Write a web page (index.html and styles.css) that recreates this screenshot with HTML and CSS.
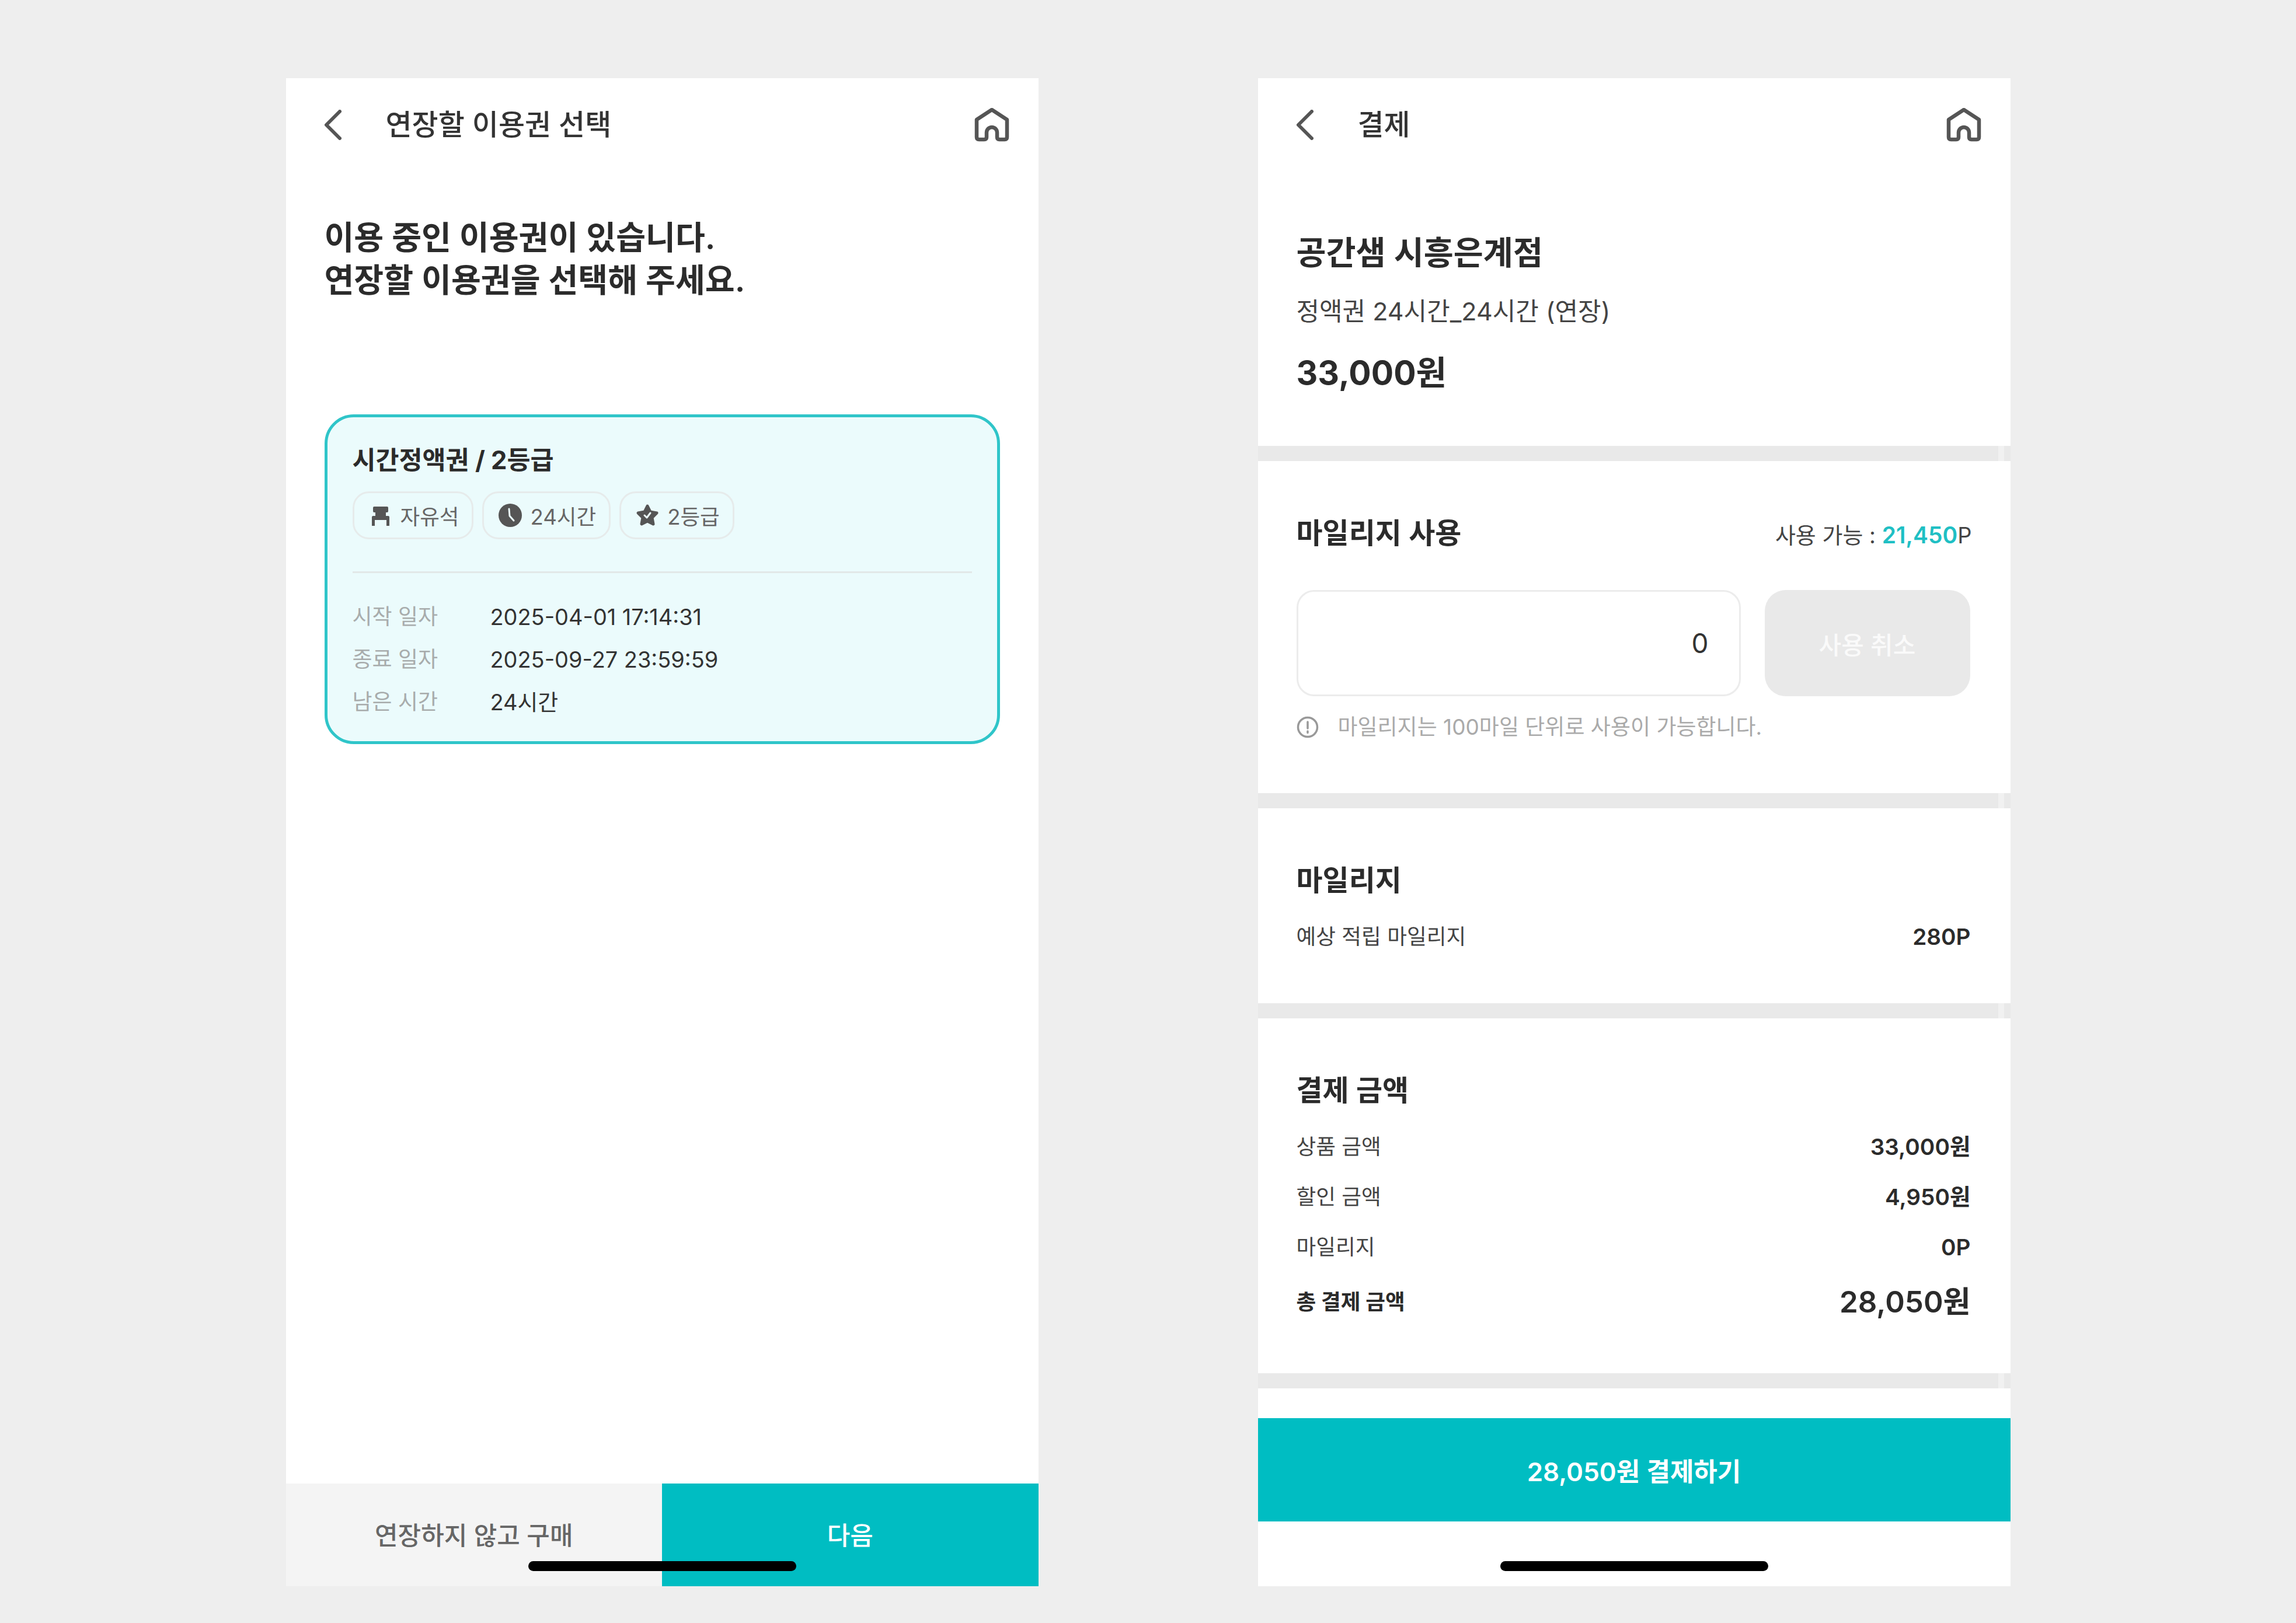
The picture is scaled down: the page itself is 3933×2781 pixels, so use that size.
FILE: index.html

```html
<!DOCTYPE html>
<html lang="ko">
<head>
  <meta charset="UTF-8" />
  <title>이용권 연장 및 결제</title>
  <link rel="stylesheet" href="styles.css">
</head>
<body>
  <div class="board">

    <!-- 연장할 이용권 선택 -->
    <div class="phone">
      <header class="top">
        <svg class="back" viewBox="0 0 30 52"><path d="M27 3 L4 26 L27 49"/></svg>
        <h1>연장할 이용권 선택</h1>
        <svg class="home" viewBox="0 0 60 58"><path d="M30 3 L4 20 V50 Q4 54 8 54 H17 Q21 54 21 50 V42 A9 9 0 0 1 39 42 V50 Q39 54 43 54 H52 Q56 54 56 50 V20 Z"/></svg>
      </header>

      <div class="body">
        <h2 class="lead">이용 중인 이용권이 있습니다.<br>연장할 이용권을 선택해 주세요.</h2>

        <div class="ticket">
          <div class="ticket-name">시간정액권 / 2등급</div>
          <div class="chips">
            <span class="chip">
              <svg viewBox="0 0 40 40"><path class="fill" d="M9 5 H31 Q33 5 33 7 V13 Q33 15 31 15 H29 V21 H33 Q35 21 35 23 V38 H30 V28 H10 V38 H5 V23 Q5 21 7 21 H11 V15 H9 Q7 15 7 13 V7 Q7 5 9 5 Z"/></svg>
              자유석
            </span>
            <span class="chip">
              <svg viewBox="0 0 40 40"><circle class="fill" cx="20" cy="20" r="20"/><path class="hand" d="M18 9 L19 21 L26 29"/></svg>
              24시간
            </span>
            <span class="chip">
              <svg viewBox="0 0 40 40"><path class="fill star" d="M20 4 L25 14 L36 16 L28 24 L30 35 L20 30 L10 35 L12 24 L4 16 L15 14 Z"/><path class="hand" d="M15 20 L19 24 L25 16"/></svg>
              2등급
            </span>
          </div>
          <div class="ticket-line"></div>
          <div class="ticket-rows">
            <div class="ticket-row"><span>시작 일자</span><b>2025-04-01 17:14:31</b></div>
            <div class="ticket-row"><span>종료 일자</span><b>2025-09-27 23:59:59</b></div>
            <div class="ticket-row"><span>남은 시간</span><b>24시간</b></div>
          </div>
        </div>
      </div>

      <div class="bottom-btns">
        <button class="btn-skip">연장하지 않고 구매</button>
        <button class="btn-next">다음</button>
      </div>
      <div class="home-bar"></div>
    </div>

    <!-- 결제 -->
    <div class="phone">
      <header class="top">
        <svg class="back" viewBox="0 0 30 52"><path d="M27 3 L4 26 L27 49"/></svg>
        <h1>결제</h1>
        <svg class="home" viewBox="0 0 60 58"><path d="M30 3 L4 20 V50 Q4 54 8 54 H17 Q21 54 21 50 V42 A9 9 0 0 1 39 42 V50 Q39 54 43 54 H52 Q56 54 56 50 V20 Z"/></svg>
      </header>

      <section class="product">
        <h3 class="store">공간샘 시흥은계점</h3>
        <p class="product-name">정액권 24시간_24시간 (연장)</p>
        <p class="product-price">33,000원</p>
      </section>
      <div class="divider"></div>

      <section class="sec sec-use">
        <div class="sec-head">
          <h3>마일리지 사용</h3>
          <span class="usable">사용 가능 : <em>21,450</em>P</span>
        </div>
        <div class="use-row">
          <div class="mile-input">0</div>
          <button class="btn-cancel">사용 취소</button>
        </div>
        <div class="note">
          <svg viewBox="0 0 38 38"><circle cx="19" cy="19" r="16.5"/><path d="M19 10 V21 M19 26 V28.5"/></svg>
          마일리지는 100마일 단위로 사용이 가능합니다.
        </div>
      </section>
      <div class="divider"></div>

      <section class="sec sec-earn">
        <div class="sec-head"><h3>마일리지</h3></div>
        <div class="line"><span>예상 적립 마일리지</span><b>280P</b></div>
      </section>
      <div class="divider"></div>

      <section class="sec sec-sum">
        <div class="sec-head"><h3>결제 금액</h3></div>
        <div class="line"><span>상품 금액</span><b>33,000원</b></div>
        <div class="line"><span>할인 금액</span><b>4,950원</b></div>
        <div class="line"><span>마일리지</span><b>0P</b></div>
        <div class="line total"><span>총 결제 금액</span><b>28,050원</b></div>
      </section>
      <div class="divider"></div>

      <button class="btn-pay">28,050원 결제하기</button>
      <div class="home-bar"></div>
    </div>

  </div>
</body>
</html>
```

FILE: styles.css

```css
* {
  box-sizing: border-box;
}
body {
  margin: 0;
  background: #eeeeee;
  color: #2b2b2b;
  font-family: Inter, "Noto Sans CJK KR", sans-serif;
}
h1, h2, h3, p {
  margin: 0;
}
button {
  border: none;
  font-family: inherit;
  padding: 0;
}
.board {
  display: flex;
  justify-content: center;
  gap: 376px;
  height: 2781px;
  padding-top: 134px;
  overflow: hidden;
}
.phone {
  position: relative;
  display: flex;
  flex-direction: column;
  width: 1289px;
  height: 2584px;
  background: #fff;
}

/* header */
.top {
  display: flex;
  align-items: center;
  height: 160px;
  padding: 0 50px 0 65px;
  flex-shrink: 0;
}
.back {
  width: 30px;
  height: 52px;
  margin-right: 76px;
}
.back path {
  fill: none;
  stroke: #555;
  stroke-width: 6;
  stroke-linecap: round;
  stroke-linejoin: round;
}
.top h1 {
  flex: 1;
  font-size: 49px;
  line-height: 70px;
  font-weight: 500;
  color: #333;
}
.home {
  width: 60px;
  height: 58px;
}
.home path {
  fill: none;
  stroke: #555;
  stroke-width: 6.5;
  stroke-linejoin: round;
}

/* left screen */
.body {
  flex: 1;
  padding: 76px 66px 0;
}
.lead {
  font-size: 55.3px;
  line-height: 73px;
  font-weight: 600;
  color: #2b2b2b;
}
.ticket {
  margin-top: 194px;
  height: 565px;
  padding: 43px 43px 36px;
  background: #ebfbfc;
  border: 5px solid #2fc5c9;
  border-radius: 50px;
}
.ticket-name {
  font-size: 43.5px;
  line-height: 60px;
  font-weight: 700;
  color: #2b2b2b;
}
.chips {
  display: flex;
  gap: 15px;
  margin-top: 24px;
}
.chip {
  display: flex;
  align-items: center;
  gap: 14px;
  height: 82px;
  padding: 0 22px 0 25px;
  border: 3px solid #e6ebeb;
  border-radius: 28px;
  font-size: 36.6px;
  color: #666;
}
.chip svg {
  width: 40px;
  height: 40px;
}
.chip .fill {
  fill: #555;
}
.chip .star {
  stroke: #555;
  stroke-width: 5;
  stroke-linejoin: round;
}
.chip .hand {
  fill: none;
  stroke: #ebfbfc;
  stroke-width: 3;
  stroke-linecap: round;
  stroke-linejoin: round;
}
.ticket-line {
  height: 3px;
  margin-top: 55px;
  background: #e2e8e8;
}
.ticket-rows {
  display: flex;
  flex-direction: column;
  gap: 13px;
  margin-top: 45px;
}
.ticket-row {
  display: flex;
  font-size: 37px;
  line-height: 60px;
}
.ticket-row span {
  width: 236px;
  color: #a8acac;
}
.ticket-row b {
  font-size: 37.9px;
  font-weight: 400;
  color: #333;
}
.bottom-btns {
  display: flex;
  height: 176px;
  flex-shrink: 0;
}
.bottom-btns button {
  flex: 1;
  padding-bottom: 4px;
  font-size: 43px;
  font-weight: 500;
}
.btn-skip {
  background: #f4f4f4;
  color: #666;
}
.btn-next {
  background: #00bdc2;
  color: #fff;
}
.home-bar {
  position: absolute;
  left: 415px;
  bottom: 26px;
  width: 459px;
  height: 17px;
  border-radius: 9px;
  background: #000;
}

/* right screen */
.product {
  padding: 104px 66px 87px;
}
.store {
  font-size: 55.5px;
  line-height: 70px;
  font-weight: 600;
}
.product-name {
  margin-top: 37px;
  font-size: 43px;
  line-height: 56px;
  color: #444;
}
.product-price {
  margin-top: 40px;
  font-size: 57px;
  line-height: 76px;
  font-weight: 700;
}
.divider {
  height: 26px;
  flex-shrink: 0;
  background: linear-gradient(to right, #e9e9e9 1268px, #f1f1f1 1268px, #f1f1f1 1278px, #e9e9e9 1278px);
}
.sec {
  padding: 89px 66px;
}
.sec-use {
  padding-bottom: 88px;
}
.sec-sum {
  padding-bottom: 84px;
}
.sec-head {
  display: flex;
  align-items: center;
  justify-content: space-between;
}
.sec-head h3 {
  font-size: 49px;
  line-height: 70px;
  font-weight: 600;
}
.usable {
  font-size: 38px;
  color: #444;
}
.usable em {
  font-size: 39px;
  font-style: normal;
  font-weight: 600;
  color: #1fbfc4;
}
.use-row {
  display: flex;
  gap: 41px;
  margin-top: 62px;
}
.mile-input {
  display: flex;
  align-items: center;
  justify-content: flex-end;
  width: 761px;
  height: 182px;
  padding-right: 52px;
  border: 3px solid #ececec;
  border-radius: 30px;
  font-size: 46px;
  color: #333;
}
.btn-cancel {
  width: 352px;
  height: 182px;
  border-radius: 36px;
  background: #e9e9e9;
  color: #fafafa;
  font-size: 42px;
  font-weight: 500;
}
.note {
  display: flex;
  align-items: center;
  gap: 33px;
  margin-top: 28px;
  font-size: 37px;
  line-height: 50px;
  color: #aaa;
}
.note svg {
  width: 38px;
  height: 38px;
}
.note circle, .note path {
  fill: none;
  stroke: #999;
  stroke-width: 3.5;
  stroke-linecap: round;
}
.line {
  display: flex;
  align-items: center;
  justify-content: space-between;
  margin-top: 36px;
  padding-right: 2px;
  font-size: 36.7px;
  line-height: 50px;
  color: #444;
}
.line b {
  font-size: 38.7px;
  font-weight: 600;
  color: #2b2b2b;
}
.line.total {
  margin-top: 31px;
  line-height: 76px;
}
.line.total span {
  font-weight: 700;
  color: #2b2b2b;
}
.line.total b {
  font-size: 51px;
}
.btn-pay {
  height: 177px;
  margin-top: 51px;
  flex-shrink: 0;
  background: #00bdc2;
  color: #fff;
  font-size: 44px;
  font-weight: 600;
}
```
